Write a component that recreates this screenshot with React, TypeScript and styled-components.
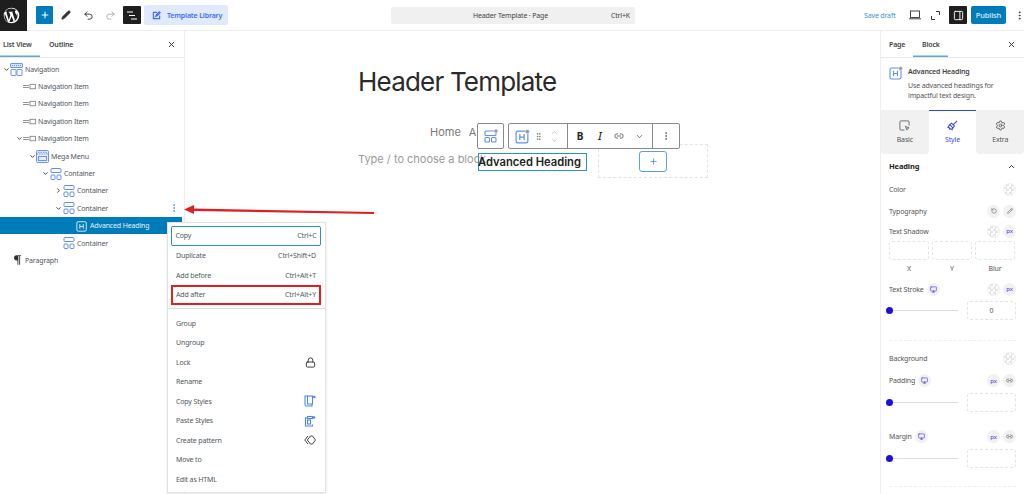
import React from "react";
import styled, { createGlobalStyle } from "styled-components";
import {
  ChevronDown,
  ChevronRight,
  ChevronUp,
  EllipsisVertical,
  Link2,
  Lock,
  Monitor,
  Pencil,
  Plus,
  Redo2,
  RotateCcw,
  Settings,
  Undo2,
  X,
  GripVertical,
  PanelRight,
} from "lucide-react";

const GlobalStyle = createGlobalStyle`
  html, body { margin: 0; padding: 0; background: #fff; }
  body { font-family: "Noto Sans", "Liberation Sans", sans-serif; color: #3c434a; letter-spacing: -0.15px; }
  * { box-sizing: border-box; }
`;

const Page = styled.div`
  position: relative;
  width: 1024px;
  height: 494px;
  overflow: hidden;
  display: flex;
  flex-direction: column;
`;

/* top bar */
const TopBar = styled.header`
  height: 31px;
  flex: none;
  display: flex;
  align-items: center;
  border-bottom: 1px solid #eeeeee;
`;

const LogoBox = styled.div`
  width: 27px;
  height: 31px;
  padding-right: 5px;
  background: #1e1e1e;
  display: flex;
  align-items: center;
  justify-content: center;
`;

const ToolGroup = styled.div`
  display: flex;
  align-items: center;
  margin-left: 9px;
  width: 355px;
`;

const PlusButton = styled.div`
  width: 17px;
  height: 18px;
  border-radius: 1px;
  background: #007cba;
  color: #fff;
  display: flex;
  align-items: center;
  justify-content: center;
`;

const IconSlot = styled.div<{ $w: number; $color?: string; $ml?: number }>`
  width: ${(p) => p.$w}px;
  margin-left: ${(p) => p.$ml ?? 0}px;
  display: flex;
  justify-content: center;
  align-items: center;
  color: ${(p) => p.$color || "#333"};
  svg {
    flex: none;
  }
`;

const DarkButton = styled.div`
  width: 18px;
  height: 18px;
  background: #1e1e1e;
  border-radius: 1px;
  color: #fff;
  display: flex;
  align-items: center;
  justify-content: center;
`;

const LibraryButton = styled.div`
  margin-left: 3px;
  width: 84px;
  height: 20px;
  border-radius: 2px;
  background: #e1e9fd;
  color: #3f6cf0;
  font-size: 7px;
  font-weight: 600;
  display: flex;
  align-items: center;
  gap: 6px;
  padding-left: 8px;
`;

const Search = styled.div`
  width: 244px;
  height: 17px;
  background: #f0f0f0;
  border-radius: 2px;
  font-size: 7px;
  color: #444;
  display: flex;
  align-items: center;
  padding: 0 5px 0 82px;
  justify-content: space-between;
`;

const RightTools = styled.div`
  margin-left: auto;
  display: flex;
  align-items: center;
`;

const SaveDraft = styled.span`
  font-size: 7px;
  color: #3a94c4;
  width: 45px;
`;

const PublishButton = styled.div`
  width: 35px;
  height: 18px;
  margin-left: 4px;
  background: #007cba;
  border-radius: 2px;
  color: #dfeef6;
  font-size: 7.5px;
  font-weight: 500;
  display: flex;
  align-items: center;
  justify-content: center;
`;

/* main split */
const Body = styled.div`
  flex: 1;
  display: flex;
  min-height: 0;
`;

const LeftPanel = styled.aside`
  width: 185px;
  flex: none;
  border-right: 1px solid #eeeeee;
`;

const PanelTabs = styled.div`
  height: 27px;
  display: flex;
  align-items: stretch;
  border-bottom: 1px solid #e8e8e8;
  font-size: 7px;
  font-weight: 600;
  color: #444;
`;

const PanelTab = styled.div<{ $active?: boolean; $w: number; $pad: number }>`
  width: ${(p) => p.$w}px;
  padding-left: ${(p) => p.$pad}px;
  display: flex;
  align-items: center;
  box-shadow: ${(p) => (p.$active ? "inset 0 -1.5px 0 #5aa9cf" : "none")};
`;

const CloseSlot = styled.div<{ $right: number }>`
  margin-left: auto;
  margin-right: ${(p) => p.$right}px;
  display: flex;
  align-items: center;
  color: #333;
`;

const Tree = styled.div`
  padding-top: 2.5px;
`;

const TreeRow = styled.div<{ $indent: number; $selected?: boolean }>`
  position: relative;
  height: 17.4px;
  width: 182px;
  display: flex;
  align-items: center;
  padding-left: ${(p) => p.$indent}px;
  font-size: 7px;
  color: ${(p) => (p.$selected ? "#e6f2f8" : "#50575e")};
  background: ${(p) => (p.$selected ? "#007cba" : "transparent")};
  white-space: nowrap;
`;

const Caret = styled.span`
  width: 7px;
  display: flex;
  justify-content: center;
  color: #333;
`;

const RowIcon = styled.span<{ $w: number }>`
  width: ${(p) => p.$w}px;
  margin-right: 2px;
  display: flex;
  justify-content: center;
  align-items: center;
`;

const RowMenu = styled.span`
  position: absolute;
  left: 169px;
  display: flex;
  color: #3f89c6;
`;

/* canvas */
const Canvas = styled.main`
  flex: 1;
  padding: 34px 0 0 173px;
  font-family: Inter, "Noto Sans", sans-serif;
  letter-spacing: 0;
`;

const PageTitle = styled.h1`
  margin: 0;
  font-size: 26px;
  line-height: 34px;
  font-weight: 400;
  color: #2a2a2a;
  letter-spacing: -0.8px;
`;

const NavLinks = styled.div`
  margin: 25px 0 0 72px;
  font-size: 11px;
  line-height: 16px;
  color: #777;
  display: flex;
  gap: 8px;
`;

const Placeholder = styled.div`
  margin-top: 10.5px;
  font-size: 11px;
  line-height: 16px;
  color: #9a9a9a;
  white-space: nowrap;
`;

const ParentTool = styled.div`
  position: absolute;
  left: 477px;
  top: 123px;
  width: 27px;
  height: 26px;
  background: #fff;
  border: 1px solid #8a8a8a;
  border-radius: 2px;
  display: flex;
  align-items: center;
  justify-content: center;
`;

const BlockToolbar = styled.div`
  position: absolute;
  left: 508px;
  top: 123px;
  width: 172px;
  height: 26px;
  background: #fff;
  border: 1px solid #8a8a8a;
  border-radius: 2px;
  display: flex;
  align-items: center;
`;

const ToolSection = styled.div<{ $w: number; $border?: boolean }>`
  width: ${(p) => p.$w}px;
  height: 100%;
  display: flex;
  align-items: center;
  border-right: ${(p) => (p.$border ? "1px solid #8a8a8a" : "none")};
  color: #555;
`;

const FormatMark = styled.span<{ $italic?: boolean }>`
  font-family: "Noto Sans", sans-serif;
  font-size: 10px;
  font-weight: ${(p) => (p.$italic ? 500 : 700)};
  font-style: ${(p) => (p.$italic ? "italic" : "normal")};
  color: #222;
`;

const MoverColumn = styled.span`
  display: flex;
  flex-direction: column;
  color: #999;
  gap: 1px;
`;

const HeadingBlock = styled.div`
  position: absolute;
  left: 478px;
  top: 153px;
  width: 109px;
  height: 18px;
  border: 1px solid #2f8fbe;
  font-family: Inter, "Noto Sans", sans-serif;
  font-size: 11.2px;
  font-weight: 600;
  line-height: 16px;
  letter-spacing: 0;
  text-indent: -1px;
  color: #222;
  white-space: nowrap;
`;

const DropZone = styled.div`
  position: absolute;
  left: 598px;
  top: 144px;
  width: 110px;
  height: 34px;
  border: 1px dashed #e2e2e2;
  display: flex;
  align-items: center;
  padding-left: 40px;
`;

const AddBlock = styled.div`
  width: 28px;
  height: 21px;
  background: #fff;
  border: 1px solid #5b9df0;
  border-radius: 3px;
  color: #3f7fe0;
  display: flex;
  align-items: center;
  justify-content: center;
`;

/* context menu */
const ContextMenu = styled.div`
  position: absolute;
  left: 167px;
  top: 222px;
  width: 159px;
  height: 271px;
  padding: 2.5px 4px 0 3px;
  background: #fff;
  border: 1px solid #e2e2e2;
  box-shadow: 0 1px 3px rgba(0, 0, 0, 0.1);
  font-size: 7px;
  color: #50575e;
`;

const MenuItem = styled.div<{ $focus?: boolean; $mark?: boolean }>`
  height: ${(p) => (p.$focus ? "20.5px" : "19.5px")};
  display: flex;
  align-items: center;
  justify-content: space-between;
  padding: 0 5px;
  white-space: nowrap;
  ${(p) => p.$focus && "border: 1.5px solid #2f8fbe; border-radius: 2px; padding: 0 3.5px;"}
  ${(p) => p.$mark && "border: 2px solid #e02020; padding: 0 3px;"}
`;

const MenuDivider = styled.div`
  margin: 3.5px -4px 4.5px -3px;
  border-top: 1px solid #dddddd;
`;

const Arrow = styled.svg`
  position: absolute;
  left: 183px;
  top: 203px;
`;

/* right panel */
const RightPanel = styled.aside`
  width: 144px;
  flex: none;
  border-left: 1px solid #eeeeee;
`;

const BlockCard = styled.div`
  height: 52px;
  display: flex;
  gap: 5px;
  padding: 8px 0 0 8px;
`;

const CardTitle = styled.div`
  font-size: 7px;
  font-weight: 600;
  line-height: 12px;
  margin-bottom: 3px;
  color: #444;
`;

const CardText = styled.div`
  font-size: 7px;
  line-height: 10px;
  color: #555;
`;

const StyleTabs = styled.div`
  height: 44px;
  display: flex;
`;

const StyleTab = styled.div<{ $active?: boolean }>`
  flex: 1;
  display: flex;
  flex-direction: column;
  align-items: center;
  padding-top: 9px;
  gap: 4px;
  font-size: 7px;
  background: ${(p) => (p.$active ? "#fff" : "#f1f1f1")};
  color: ${(p) => (p.$active ? "#3d4ee8" : "#555")};
  border-top: ${(p) => (p.$active ? "1px solid #2f43e8" : "1px solid #f1f1f1")};
  border-radius: ${(p) => (p.$active ? "0" : "0 0 4px 4px")};
`;

const StylePane = styled.div`
  padding: 6px 8px 0;
  font-size: 7px;
  color: #555;
`;

const SectionHead = styled.div`
  display: flex;
  justify-content: space-between;
  align-items: center;
  height: 12px;
  font-size: 7.5px;
  font-weight: 700;
  color: #222;
  margin-bottom: 10px;
`;

const FieldRow = styled.div<{ $mb?: number }>`
  display: flex;
  align-items: center;
  gap: 3px;
  height: 14px;
  margin-bottom: ${(p) => p.$mb ?? 8}px;
`;

const FieldEnd = styled.div`
  margin-left: auto;
  display: flex;
  gap: 3px;
  align-items: center;
`;

const Swatch = styled.span`
  width: 13px;
  height: 13px;
  border-radius: 50%;
  border: 1px solid #eee;
  background: repeating-conic-gradient(#e4e4e4 0 25%, #fff 0 50%) 0 0 / 5px 5px;
`;

const RoundButton = styled.span<{ $accent?: boolean }>`
  width: 13px;
  height: 13px;
  border-radius: 50%;
  background: #f1f1f1;
  color: ${(p) => (p.$accent ? "#3d2be8" : "#555")};
  font-size: 6px;
  display: flex;
  align-items: center;
  justify-content: center;
`;

const ShadowInputs = styled.div`
  display: grid;
  grid-template-columns: repeat(3, 40px);
  gap: 3px;
  margin-top: 3px;
`;

const ShadowInput = styled.div`
  display: flex;
  flex-direction: column;
  align-items: center;
  gap: 4px;
  font-size: 7px;
  margin-bottom: 9px;
`;

const DashedBox = styled.div<{ $w: number }>`
  width: ${(p) => p.$w}px;
  height: 19px;
  border: 1px dashed #e4e4e4;
  border-radius: 3px;
  display: flex;
  align-items: center;
  justify-content: center;
  font-size: 7px;
  color: #555;
`;

const SliderRow = styled.div<{ $mb: number }>`
  display: flex;
  align-items: center;
  justify-content: space-between;
  margin: 1px 0 ${(p) => p.$mb}px;
`;

const Track = styled.div`
  position: relative;
  width: 69px;
  height: 1px;
  background: #dddddd;
`;

const Thumb = styled.span`
  position: absolute;
  left: -3px;
  top: -3px;
  width: 7px;
  height: 7px;
  border-radius: 50%;
  background: #1a0fe0;
`;

const DottedRule = styled.div<{ $mb: number }>`
  border-top: 1px dashed #eeeeee;
  margin-bottom: ${(p) => p.$mb}px;
`;

/* drawn icons */
const WpLogo = () => (
  <svg width="17" height="17" viewBox="0 0 24 24" fill="#fff">
    <path d="M12 1a11 11 0 1 0 0 22 11 11 0 0 0 0-22Zm0 1.2c2.6 0 5 1 6.7 2.7h-.2c-1 0-1.7.9-1.7 1.8 0 .8.5 1.5 1 2.3.4.7.8 1.5.8 2.8 0 .9-.3 1.9-.8 3.300l-1 3.400-3.700-11 .6-.1c.6 0 .5-.9 0-.8 0 0-1.700.1-2.800.1l-2.700-.1c-.5 0-.6.8 0 .8l.6.1 1.600 4.300-2.200 6.700L4.800 7.700l.6-.1c.6 0 .5-.9 0-.8l-2.300.1A9.800 9.800 0 0 1 12 2.200ZM2.600 9.600 7 21a9.800 9.800 0 0 1-4.400-11.400Zm9.600 3.300 2.800 7.600a9.700 9.700 0 0 1-6 .2l3.200-7.800Zm7.500-4.800a9.800 9.800 0 0 1-3.600 11.900l3-8.600c.6-1.300.7-2.400.6-3.300Z" />
  </svg>
);

const NavIcon = () => (
  <svg width="13" height="13" viewBox="0 0 13 13" fill="none" stroke="#6c93f2" strokeWidth="1">
    <rect x="0.5" y="0.5" width="12" height="4" rx="0.5" fill="#dbe5fd" />
    <rect x="1" y="6.500" width="5" height="6" rx="0.5" />
    <rect x="7" y="6.500" width="5" height="6" rx="0.5" />
    <path d="M2 2.500h9" strokeDasharray="1 1" />
  </svg>
);

const ItemIcon = () => (
  <svg width="13" height="7" viewBox="0 0 13 7" fill="none" stroke="#777" strokeWidth="0.8">
    <path d="M0 2.500h6M0 4.500h6" />
    <rect x="7" y="1.300" width="5.500" height="4.500" />
  </svg>
);

const MegaIcon = () => (
  <svg width="13" height="13" viewBox="0 0 13 13" fill="none" stroke="#6c93f2" strokeWidth="1">
    <rect x="0.500" y="0.500" width="12" height="12" rx="1" fill="#e6edfd" />
    <path d="M0.500 4h12M2 2.300h9" strokeDasharray="1.500 1" />
    <rect x="2.500" y="6.500" width="8" height="4" />
  </svg>
);

const ContainerIcon = ({ size = 12 }: { size?: number }) => (
  <svg width={size} height={size} viewBox="0 0 12 12" fill="none" stroke="#5f8df2" strokeWidth="1">
    <rect x="1" y="0.500" width="10" height="4" rx="1" />
    <rect x="1" y="7" width="4" height="4.500" rx="1" />
    <rect x="7" y="7" width="4" height="4.500" rx="1" />
  </svg>
);

const HeadingIcon = ({ color = "#5f8df2", size = 12, dot = false }: { color?: string; size?: number; dot?: boolean }) => (
  <svg width={size} height={size} viewBox="0 0 14 14" fill="none" stroke={color} strokeWidth="1.100">
    <rect x="1" y="2" width="11" height="11" rx="1.500" />
    <path d="M4.500 4.700v5.600M8.500 4.700v5.600M4.500 7.500h4" />
    {dot && <circle cx="11.500" cy="2.500" r="2" fill="#999" stroke="#fff" strokeWidth="0.500" />}
  </svg>
);

const ToolIcon = () => (
  <svg width="16" height="16" viewBox="0 0 16 16" fill="none" stroke="#5f8df2" strokeWidth="1.100">
    <rect x="2" y="3" width="11" height="4.500" rx="1" />
    <rect x="2" y="9.500" width="4.500" height="4.500" rx="1" />
    <rect x="8.500" y="9.500" width="4.500" height="4.500" rx="1" />
    <circle cx="13" cy="3" r="2" fill="#999" stroke="#fff" strokeWidth="0.500" />
  </svg>
);

const ListLines = () => (
  <svg width="10" height="9" viewBox="0 0 10 9" stroke="#fff" strokeWidth="1">
    <path d="M0 1h6M2 4.500h6M4 8h6" />
  </svg>
);

const LaptopIcon = () => (
  <svg width="12" height="10" viewBox="0 0 12 10" fill="none" stroke="#333" strokeWidth="0.9">
    <rect x="1.500" y="1" width="9" height="6.500" />
    <path d="M0 8.800h12" />
  </svg>
);

const FullscreenIcon = () => (
  <svg width="9" height="9" viewBox="0 0 9 9" fill="none" stroke="#333" strokeWidth="1">
    <path d="M5 .5h3.500V4M.5 5v3.500H4" />
  </svg>
);

const LibraryIcon = () => (
  <svg width="9" height="9" viewBox="0 0 10 10" fill="none" stroke="#3f6cf0" strokeWidth="1.300">
    <path d="M5.500 1.500H1.500v7h7V5M4 6l1-2 3-3 1 1-3 3-2 1Z" />
  </svg>
);

const CopyStyleIcon = () => (
  <svg width="12" height="12" viewBox="0 0 12 12" fill="none" stroke="#4f86ee" strokeWidth="1.100">
    <path d="M3.500 1H1v8.500c0 .8.500 1.500 1.500 1.500H8V9" />
    <rect x="3.500" y="1" width="5" height="8" />
    <circle cx="10.300" cy="2" r="1.300" fill="#4f86ee" stroke="none" />
  </svg>
);

const PasteIcon = () => (
  <svg width="12" height="12" viewBox="0 0 12 12" fill="none" stroke="#4f86ee" strokeWidth="1.100">
    <path d="M3 3H1.500v8h7V9.500" />
    <rect x="3.500" y="5" width="3" height="4" />
    <rect x="3.500" y="1.500" width="5" height="2" />
    <circle cx="10" cy="2.500" r="1.300" fill="#4f86ee" stroke="none" />
  </svg>
);

const PatternIcon = () => (
  <svg width="12" height="10" viewBox="0 0 12 10" fill="none" stroke="#444" strokeWidth="1">
    <path d="M4 1 .8 5 4 9M6.500 1 3.300 5l3.200 4h2L11.500 5 8.500 1h-2Z" />
  </svg>
);

const BrushIcon = () => (
  <svg width="11" height="11" viewBox="0 0 12 12" fill="none" stroke="#3d4ee8" strokeWidth="1.200">
    <path d="M11 1 7 5M8 6.500l-3-3-2 1.500 3.500 3.500L8 6.500ZM3 5 1 8l1.500.5L3 10l1-.5 1.500 1L6.500 8.500" />
  </svg>
);

const BasicIcon = () => (
  <svg width="11" height="11" viewBox="0 0 12 12" fill="none" stroke="#666" strokeWidth="1">
    <path d="M6 11H2a1 1 0 0 1-1-1V2a1 1 0 0 1 1-1h8a1 1 0 0 1 1 1v4" />
    <path d="m7 7 4 1.500-1.500.8-.8 1.700L7 7Z" />
  </svg>
);

const ParagraphMark = () => (
  <svg width="7" height="10" viewBox="0 0 8 11" fill="#333">
    <path d="M3 0h5v1H7v10H6V1H5v10H4V6H3a3 3 0 0 1 0-6Z" />
  </svg>
);

type TreeEntry = {
  label: string;
  indent: number;
  caret?: "down" | "right";
  icon: React.ReactNode;
  iconWidth: number;
  selected?: boolean;
  menu?: boolean;
};

const treeEntries: TreeEntry[] = [
  { label: "Navigation", indent: 3, caret: "down", icon: <NavIcon />, iconWidth: 13 },
  { label: "Navigation Item", indent: 23, icon: <ItemIcon />, iconWidth: 13 },
  { label: "Navigation Item", indent: 23, icon: <ItemIcon />, iconWidth: 13 },
  { label: "Navigation Item", indent: 23, icon: <ItemIcon />, iconWidth: 13 },
  { label: "Navigation Item", indent: 16, caret: "down", icon: <ItemIcon />, iconWidth: 13 },
  { label: "Mega Menu", indent: 29, caret: "down", icon: <MegaIcon />, iconWidth: 13 },
  { label: "Container", indent: 42, caret: "down", icon: <ContainerIcon />, iconWidth: 13 },
  { label: "Container", indent: 55, caret: "right", icon: <ContainerIcon />, iconWidth: 13 },
  { label: "Container", indent: 55, caret: "down", icon: <ContainerIcon />, iconWidth: 13, menu: true },
  { label: "Advanced Heading", indent: 75, icon: <HeadingIcon color="#dcecf5" />, iconWidth: 13, selected: true },
  { label: "Container", indent: 62, icon: <ContainerIcon />, iconWidth: 13 },
  { label: "Paragraph", indent: 11, icon: <ParagraphMark />, iconWidth: 12 },
];

const menuTop: { label: string; keys: string }[] = [
  { label: "Duplicate", keys: "Ctrl+Shift+D" },
  { label: "Add before", keys: "Ctrl+Alt+T" },
];

const menuBottom: { label: string; icon?: React.ReactNode }[] = [
  { label: "Group" },
  { label: "Ungroup" },
  { label: "Lock", icon: <Lock size={11} color="#333" /> },
  { label: "Rename" },
  { label: "Copy Styles", icon: <CopyStyleIcon /> },
  { label: "Paste Styles", icon: <PasteIcon /> },
  { label: "Create pattern", icon: <PatternIcon /> },
  { label: "Move to" },
  { label: "Edit as HTML" },
];

const App: React.FC = () => {
  return (
    <Page>
      <GlobalStyle />
      <TopBar>
        <LogoBox>
          <WpLogo />
        </LogoBox>
        <ToolGroup>
          <PlusButton>
            <Plus size={10} strokeWidth={2.5} />
          </PlusButton>
          <IconSlot $w={26}>
            <Pencil size={10} fill="#333" />
          </IconSlot>
          <IconSlot $w={18}>
            <Undo2 size={11} />
          </IconSlot>
          <IconSlot $w={26} $color="#aaa">
            <Redo2 size={11} />
          </IconSlot>
          <DarkButton>
            <ListLines />
          </DarkButton>
          <LibraryButton>
            <LibraryIcon />
            Template Library
          </LibraryButton>
        </ToolGroup>
        <Search>
          <span>Header Template · Page</span>
          <span>Ctrl+K</span>
        </Search>
        <RightTools>
          <SaveDraft>Save draft</SaveDraft>
          <IconSlot $w={12}>
            <LaptopIcon />
          </IconSlot>
          <IconSlot $w={28}>
            <FullscreenIcon />
          </IconSlot>
          <DarkButton>
            <PanelRight size={11} />
          </DarkButton>
          <PublishButton>Publish</PublishButton>
          <IconSlot $w={10} $ml={8}>
            <EllipsisVertical size={11} />
          </IconSlot>
        </RightTools>
      </TopBar>

      <Body>
        <LeftPanel>
          <PanelTabs>
            <PanelTab $active $w={40} $pad={3}>
              List View
            </PanelTab>
            <PanelTab $w={40} $pad={9}>
              Outline
            </PanelTab>
            <CloseSlot $right={8}>
              <X size={9} strokeWidth={2.5} />
            </CloseSlot>
          </PanelTabs>
          <Tree>
            {treeEntries.map((entry, i) => (
              <TreeRow key={i} $indent={entry.indent} $selected={entry.selected}>
                {entry.caret && (
                  <Caret>
                    {entry.caret === "down" ? (
                      <ChevronDown size={7} strokeWidth={3} />
                    ) : (
                      <ChevronRight size={7} strokeWidth={3} />
                    )}
                  </Caret>
                )}
                <RowIcon $w={entry.iconWidth}>{entry.icon}</RowIcon>
                {entry.label}
                {entry.menu && (
                  <RowMenu>
                    <EllipsisVertical size={10} />
                  </RowMenu>
                )}
              </TreeRow>
            ))}
          </Tree>
        </LeftPanel>

        <Canvas>
          <PageTitle>Header Template</PageTitle>
          <NavLinks>
            <span>Home</span>
            <span>About</span>
          </NavLinks>
          <Placeholder>Type / to choose a block</Placeholder>
        </Canvas>

        <RightPanel>
          <PanelTabs>
            <PanelTab $w={32} $pad={8}>
              Page
            </PanelTab>
            <PanelTab $active $w={35} $pad={9}>
              Block
            </PanelTab>
            <CloseSlot $right={8}>
              <X size={9} strokeWidth={2.5} />
            </CloseSlot>
          </PanelTabs>
          <BlockCard>
            <HeadingIcon size={14} dot />
            <div>
              <CardTitle>Advanced Heading</CardTitle>
              <CardText>
                Use advanced headings for
                <br />
                impactful text design.
              </CardText>
            </div>
          </BlockCard>
          <StyleTabs>
            <StyleTab>
              <BasicIcon />
              Basic
            </StyleTab>
            <StyleTab $active>
              <BrushIcon />
              Style
            </StyleTab>
            <StyleTab>
              <Settings size={11} />
              Extra
            </StyleTab>
          </StyleTabs>
          <StylePane>
            <SectionHead>
              Heading
              <ChevronUp size={9} strokeWidth={2.5} />
            </SectionHead>
            <FieldRow>
              Color
              <FieldEnd>
                <Swatch />
              </FieldEnd>
            </FieldRow>
            <FieldRow $mb={6}>
              Typography
              <FieldEnd>
                <RoundButton>
                  <RotateCcw size={6} />
                </RoundButton>
                <RoundButton>
                  <Pencil size={6} />
                </RoundButton>
              </FieldEnd>
            </FieldRow>
            <FieldRow $mb={0}>
              Text Shadow
              <FieldEnd>
                <Swatch />
                <RoundButton $accent>px</RoundButton>
              </FieldEnd>
            </FieldRow>
            <ShadowInputs>
              <ShadowInput>
                <DashedBox $w={40} />X
              </ShadowInput>
              <ShadowInput>
                <DashedBox $w={40} />Y
              </ShadowInput>
              <ShadowInput>
                <DashedBox $w={40} />
                Blur
              </ShadowInput>
            </ShadowInputs>
            <FieldRow $mb={5}>
              Text Stroke
              <RoundButton $accent>
                <Monitor size={7} />
              </RoundButton>
              <FieldEnd>
                <Swatch />
                <RoundButton $accent>px</RoundButton>
              </FieldEnd>
            </FieldRow>
            <SliderRow $mb={20}>
              <Track>
                <Thumb />
              </Track>
              <DashedBox $w={49}>0</DashedBox>
            </SliderRow>
            <DottedRule $mb={10} />
            <FieldRow $mb={8.5}>
              Background
              <FieldEnd>
                <Swatch />
              </FieldEnd>
            </FieldRow>
            <FieldRow $mb={5}>
              Padding
              <RoundButton $accent>
                <Monitor size={7} />
              </RoundButton>
              <FieldEnd>
                <RoundButton $accent>px</RoundButton>
                <RoundButton>
                  <Link2 size={7} />
                </RoundButton>
              </FieldEnd>
            </FieldRow>
            <SliderRow $mb={18}>
              <Track>
                <Thumb />
              </Track>
              <DashedBox $w={49} />
            </SliderRow>
            <FieldRow $mb={5}>
              Margin
              <RoundButton $accent>
                <Monitor size={7} />
              </RoundButton>
              <FieldEnd>
                <RoundButton $accent>px</RoundButton>
                <RoundButton>
                  <Link2 size={7} />
                </RoundButton>
              </FieldEnd>
            </FieldRow>
            <SliderRow $mb={18}>
              <Track>
                <Thumb />
              </Track>
              <DashedBox $w={49} />
            </SliderRow>
            <DottedRule $mb={0} />
          </StylePane>
        </RightPanel>
      </Body>

      <DropZone>
        <AddBlock>
          <Plus size={9} />
        </AddBlock>
      </DropZone>
      <HeadingBlock>Advanced Heading</HeadingBlock>
      <ParentTool>
        <ToolIcon />
      </ParentTool>
      <BlockToolbar>
        <ToolSection $w={59} $border>
          <IconSlot $w={26}>
            <HeadingIcon size={15} dot />
          </IconSlot>
          <IconSlot $w={6} $color="#777">
            <GripVertical size={9} />
          </IconSlot>
          <IconSlot $w={26} $color="#999">
            <MoverColumn>
              <ChevronUp size={7} />
              <ChevronDown size={7} />
            </MoverColumn>
          </IconSlot>
        </ToolSection>
        <ToolSection $w={85} $border>
          <IconSlot $w={24}>
            <FormatMark>B</FormatMark>
          </IconSlot>
          <IconSlot $w={16}>
            <FormatMark $italic>I</FormatMark>
          </IconSlot>
          <IconSlot $w={22} $color="#555">
            <Link2 size={10} />
          </IconSlot>
          <IconSlot $w={18} $color="#555">
            <ChevronDown size={9} />
          </IconSlot>
        </ToolSection>
        <ToolSection $w={26}>
          <IconSlot $w={26} $color="#555">
            <EllipsisVertical size={10} />
          </IconSlot>
        </ToolSection>
      </BlockToolbar>

      <ContextMenu>
        <MenuItem $focus>
          <span>Copy</span>
          <span>Ctrl+C</span>
        </MenuItem>
        {menuTop.map((item) => (
          <MenuItem key={item.label}>
            <span>{item.label}</span>
            <span>{item.keys}</span>
          </MenuItem>
        ))}
        <MenuItem $mark>
          <span>Add after</span>
          <span>Ctrl+Alt+Y</span>
        </MenuItem>
        <MenuDivider />
        {menuBottom.map((item) => (
          <MenuItem key={item.label}>
            <span>{item.label}</span>
            {item.icon}
          </MenuItem>
        ))}
      </ContextMenu>

      <Arrow width="194" height="14" viewBox="0 0 194 14">
        <path d="M1 6.500 11 2V5.500L191 9V11L11 8V11Z" fill="#dd1f26" />
      </Arrow>
    </Page>
  );
};

export default App;
